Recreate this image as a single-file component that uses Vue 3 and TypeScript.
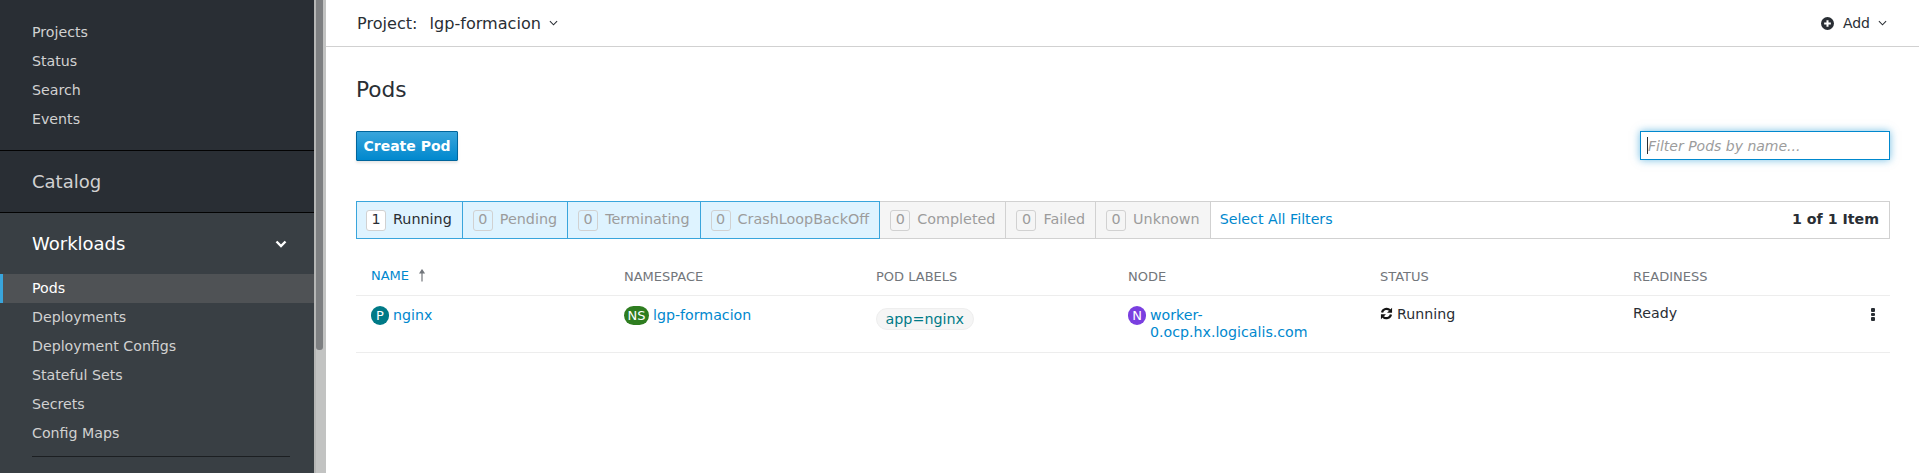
<script setup lang="ts">
interface Filter {
  count: number;
  label: string;
  kind: "on" | "off";
  active?: boolean;
}

const topLinks = ["Projects", "Status", "Search", "Events"];
const workloads = ["Pods", "Deployments", "Deployment Configs", "Stateful Sets", "Secrets", "Config Maps"];

const filters: Filter[] = [
  { count: 1, label: "Running", kind: "on", active: true },
  { count: 0, label: "Pending", kind: "on" },
  { count: 0, label: "Terminating", kind: "on" },
  { count: 0, label: "CrashLoopBackOff", kind: "on" },
  { count: 0, label: "Completed", kind: "off" },
  { count: 0, label: "Failed", kind: "off" },
  { count: 0, label: "Unknown", kind: "off" },
];
</script>

<template>
  <div class="page">
    <aside class="sidebar">
      <nav class="nav">
        <ul class="top-links">
          <li v-for="link in topLinks" :key="link">{{ link }}</li>
        </ul>
        <div class="catalog">Catalog</div>
        <div class="workloads">
          <div class="section-title">
            <span>Workloads</span>
            <svg class="section-caret" viewBox="0 0 12 8" width="12" height="8">
              <path d="M1.5 1.5 6 6l4.5-4.5" fill="none" stroke="#fff" stroke-width="2.4" />
            </svg>
          </div>
          <ul class="sub-links">
            <li v-for="(link, i) in workloads" :key="link" :class="{ current: i === 0 }">{{ link }}</li>
          </ul>
          <div class="sub-divider"></div>
        </div>
      </nav>
      <div class="scrollbar"><div class="thumb"></div></div>
    </aside>

    <main class="main">
      <header class="topbar">
        <div class="project">
          <span class="project-label">Project:</span>
          <span>lgp-formacion</span>
          <svg class="caret" viewBox="0 0 10 6" width="9" height="6">
            <path d="M1 1l4 4 4-4" fill="none" stroke="#292e34" stroke-width="1.2" />
          </svg>
        </div>
        <div class="add">
          <svg viewBox="0 0 14 14" width="13" height="13">
            <circle cx="7" cy="7" r="7" fill="#292e34" />
            <path d="M7 3.4v7.2M3.4 7h7.2" stroke="#fff" stroke-width="2.2" />
          </svg>
          <span class="add-label">Add</span>
          <svg class="caret" viewBox="0 0 10 6" width="9" height="6">
            <path d="M1 1l4 4 4-4" fill="none" stroke="#292e34" stroke-width="1.2" />
          </svg>
        </div>
      </header>

      <section class="content">
        <h1 class="title">Pods</h1>
        <div class="actions">
          <button class="create" type="button">Create Pod</button>
          <div class="filter-box"><i class="cursor"></i><em>Filter Pods by name...</em></div>
        </div>

        <div class="filter-row">
          <div
            v-for="f in filters"
            :key="f.label"
            class="filter"
            :class="[f.kind, { active: f.active }]"
          >
            <span class="count">{{ f.count }}</span>
            <span class="filter-label">{{ f.label }}</span>
          </div>
          <a class="select-all">Select All Filters</a>
          <span class="items">1 of 1 Item</span>
        </div>

        <div class="table">
          <div class="row head">
            <div class="sorted">NAME <span class="arrow">
              <svg viewBox="0 0 8 13" width="8" height="13">
                <path d="M4 1.5V12.5M2 4 4 1l2 3z" stroke="#72767b" stroke-width="1.2" fill="#72767b" />
              </svg>
            </span></div>
            <div>NAMESPACE</div>
            <div>POD LABELS</div>
            <div>NODE</div>
            <div>STATUS</div>
            <div>READINESS</div>
          </div>
          <div class="row body">
            <div class="cell"><span class="badge pod">P</span><a>nginx</a></div>
            <div class="cell"><span class="badge ns">NS</span><a>lgp-formacion</a></div>
            <div><span class="chip">app=nginx</span></div>
            <div class="cell"><span class="badge node">N</span><a class="node-link">worker-0.ocp.hx.logicalis.com</a></div>
            <div class="cell status">
              <svg viewBox="0 0 14 14" width="13" height="13">
                <path d="M2.2 6a5 5 0 0 1 8.6-2.4" fill="none" stroke="#151515" stroke-width="2.4" />
                <path d="M13 .8v5.4H7.6z" fill="#151515" />
                <path d="M11.8 8a5 5 0 0 1-8.6 2.4" fill="none" stroke="#151515" stroke-width="2.4" />
                <path d="M1 13.2V7.8h5.4z" fill="#151515" />
              </svg>
              <span>Running</span>
            </div>
            <div class="ready">
              <span>Ready</span>
              <span class="kebab"><i></i><i></i><i></i></span>
            </div>
          </div>
        </div>
      </section>
    </main>
  </div>
</template>

<style>
html,
body {
  margin: 0;
  background: #fff;
}
</style>

<style scoped>
.page {
  display: flex;
  width: 1919px;
  height: 473px;
  overflow: hidden;
  font-family: "DejaVu Sans", sans-serif;
  font-size: 14.2px;
  color: #292e34;
}

.sidebar {
  display: flex;
  flex: 0 0 326px;
}

.nav {
  flex: 0 0 314px;
  height: 473px;
  background: #292e34;
  color: #d1d1d1;
  overflow: hidden;
}

ul {
  list-style: none;
  margin: 0;
  padding: 0;
}

.top-links {
  padding: 18px 0 16px;
  border-bottom: 1px solid #030303;
}

.top-links li,
.sub-links li {
  height: 29px;
  line-height: 29px;
  padding-left: 32px;
}

.catalog {
  height: 61px;
  line-height: 61px;
  padding-left: 32px;
  font-size: 18px;
  border-bottom: 1px solid #030303;
}

.workloads {
  background: #393f44;
  height: 400px;
}

.section-title {
  display: flex;
  justify-content: space-between;
  align-items: center;
  height: 61px;
  padding: 0 27px 0 32px;
  font-size: 18px;
  color: #fff;
}

.sub-links li {
  position: relative;
}

.sub-links .current {
  background: #4f5255;
  color: #fff;
}

.sub-links .current::before {
  content: "";
  position: absolute;
  left: 0;
  top: 0;
  bottom: 0;
  width: 3px;
  background: #39a5dc;
}

.sub-divider {
  height: 1px;
  margin: 8px 24px 0 32px;
  background: #1c1f22;
}

.scrollbar {
  flex: 1;
  background: #c2c3c2;
  border-left: 2px solid #b5b6b5;
  padding-right: 3px;
}

.thumb {
  height: 350px;
  background: #7d7f81;
  border-radius: 0 0 3px 3px;
}

.main {
  flex: 1;
  min-width: 0;
}

.topbar {
  display: flex;
  justify-content: space-between;
  align-items: center;
  height: 46px;
  padding: 0 32px 0 31px;
  border-bottom: 1px solid #d1d1d1;
}

.project {
  display: flex;
  align-items: center;
  font-size: 16.1px;
}

.project-label {
  margin-right: 12px;
}

.caret {
  margin-left: 8px;
}

.add {
  display: flex;
  align-items: center;
  font-size: 14px;
}

.add-label {
  margin-left: 9px;
}

.content {
  padding: 29px 29px 0 30px;
}

.title {
  margin: 0;
  font-size: 21.7px;
  font-weight: 400;
  line-height: 28px;
}

.actions {
  display: flex;
  justify-content: space-between;
  align-items: flex-start;
  margin-top: 27px;
}

.create {
  width: 102px;
  height: 30px;
  padding: 0;
  border: 1px solid #00659c;
  border-radius: 1px;
  background: linear-gradient(#39a5dc, #0088ce);
  box-shadow: 0 2px 3px rgba(3, 3, 3, 0.1);
  color: #fff;
  font: 700 14px "DejaVu Sans", sans-serif;
}

.filter-box {
  display: flex;
  align-items: center;
  box-sizing: border-box;
  width: 250px;
  height: 29px;
  padding-left: 6px;
  border: 1px solid #0088ce;
  box-shadow: 0 0 8px rgba(0, 136, 206, 0.55);
  color: #9c9c9c;
  font-size: 14px;
}

.cursor {
  width: 1px;
  height: 17px;
  background: #292e34;
}

.filter-row {
  display: flex;
  align-items: center;
  box-sizing: border-box;
  height: 38px;
  margin-top: 40px;
  padding-right: 10px;
  border: 1px solid #d1d1d1;
  font-size: 14.35px;
}

.filter {
  display: flex;
  align-items: center;
  gap: 7px;
  box-sizing: border-box;
  height: 38px;
  margin: -1px 0;
  padding: 0 10px;
  border: 1px solid #d1d1d1;
  border-width: 1px 1px 1px 0;
  background: #f5f5f5;
  color: #9c9c9c;
  white-space: nowrap;
}

.filter-label,
.select-all,
.items {
  margin-bottom: 2px;
}

.filter.on {
  background: #def3ff;
  border-color: #39a5dc;
}

.filter.on:first-child {
  margin-left: -1px;
  padding-left: 9px;
  border-left-width: 1px;
}

.filter.active {
  color: #292e34;
}

.count {
  box-sizing: border-box;
  min-width: 20px;
  height: 21px;
  line-height: 17px;
  text-align: center;
  border: 1px solid #d1d1d1;
  border-radius: 3px;
}

.active .count {
  background: #fff;
  color: #292e34;
}

.select-all {
  margin-left: 9px;
  color: #0088ce;
  font-size: 14.2px;
}

.items {
  margin-left: auto;
  font-weight: 700;
  font-size: 14.2px;
}

.table {
  margin-top: 20px;
}

.row {
  display: grid;
  grid-template-columns: 252px 252px 252px 252px 253px 1fr;
  border-bottom: 1px solid #ededed;
}

.head {
  height: 36px;
  align-items: center;
  font-size: 13px;
  color: #72767b;
}

.head > div {
  padding: 0 0 2px 15px;
}

.head > div + div {
  padding-left: 16px;
}

.sorted {
  color: #0088ce;
}

.arrow {
  display: inline-block;
  margin-left: 5px;
  vertical-align: -2px;
}

.body {
  height: 57px;
  padding-top: 10px;
  box-sizing: border-box;
}

.body > div {
  padding-left: 15px;
}

.body > div + div {
  padding-left: 16px;
}

.cell {
  display: flex;
  align-items: flex-start;
}

a {
  color: #0088ce;
  line-height: 17px;
}

.cell a {
  margin-top: 1px;
}

.badge {
  flex: none;
  height: 19px;
  min-width: 18px;
  line-height: 19px;
  text-align: center;
  border-radius: 10px;
  color: #fff;
  font-size: 13px;
  margin-right: 4px;
}

.pod {
  background: #007a87;
}

.ns {
  min-width: 25px;
  background: #2e7d20;
}

.node {
  background: #7a3fe0;
}

.node-link {
  width: 170px;
  word-break: normal;
  overflow-wrap: anywhere;
}

.chip {
  display: inline-block;
  padding: 0 8.5px;
  height: 20px;
  line-height: 20px;
  margin-top: 2px;
  border: 1px solid #eee;
  border-radius: 11px;
  background: #f5f5f5;
  color: #007a87;
  font-size: 14.3px;
}

.status {
  align-items: center;
  height: 17px;
  gap: 4px;
  margin-top: -1px;
}

.ready {
  display: flex;
  justify-content: space-between;
  margin-top: -1px;
  padding-right: 15px;
}

.kebab {
  display: flex;
  flex-direction: column;
  gap: 1px;
  margin-top: 3px;
}

.kebab i {
  width: 4.5px;
  height: 3.6px;
  border-radius: 1px;
  background: #292e34;
}
</style>
